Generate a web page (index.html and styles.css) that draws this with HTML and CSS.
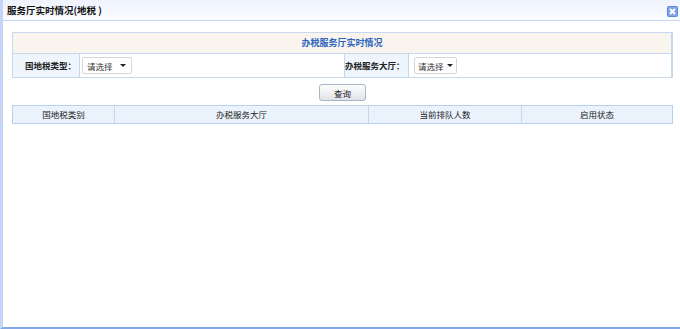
FILE: index.html
```html
<!DOCTYPE html>
<html lang="zh-CN">
<head>
    <meta charset="UTF-8">
    <title>服务厅实时情况(地税 )</title>
    <link rel="stylesheet" href="styles.css">
</head>
<body>
    <div class="window">
        <div class="titlebar">
            <span class="title">服务厅实时情况(地税 )</span>
            <span class="close">
                <svg width="11" height="11" viewBox="0 0 11 11">
                    <rect x="0.5" y="0.5" width="10" height="10" rx="1" fill="#7fa4e8" stroke="#5d86d6"/>
                    <path d="M3 3 L8 8 M8 3 L3 8" stroke="#fff" stroke-width="1.8"/>
                </svg>
            </span>
        </div>
        <div class="content">
            <div class="panel">
                <div class="panel-head">办税服务厅实时情况</div>
                <div class="form-row">
                    <div class="label">国地税类型：</div>
                    <div class="field">
                        <div class="select">请选择 <span class="arrow"></span></div>
                    </div>
                    <div class="label label2">办税服务大厅：</div>
                    <div class="field">
                        <div class="select">请选择 <span class="arrow"></span></div>
                    </div>
                </div>
            </div>
            <div class="actions">
                <button class="btn">查询</button>
            </div>
            <div class="grid-head">
                <div class="col c1">国地税类别</div>
                <div class="col c2">办税服务大厅</div>
                <div class="col c3">当前排队人数</div>
                <div class="col c4">启用状态</div>
            </div>
        </div>
    </div>
</body>
</html>
```

FILE: styles.css
```css
body {
    margin: 0;
    font-family: "Noto Sans CJK SC", "Liberation Sans", sans-serif;
    font-size: 8.5px;
    color: #222;
    background: #fff;
    white-space: nowrap;
}
.window {
    height: 327px;
    border-left: 3px solid #c4d5f6;
    border-bottom: 2px solid #85a8e8;
    background: #fff;
}
.titlebar {
    height: 20px;
    display: flex;
    align-items: center;
    justify-content: space-between;
    padding: 0 2px 0 4px;
    background: linear-gradient(#eef2fc, #fbfcff);
    border-bottom: 1px solid #c6d6f6;
}
.title {
    font-size: 9.5px;
    font-weight: bold;
    color: #111;
}
.close {
    display: flex;
    margin-top: 2px;
}
.content {
    padding: 11px 7px 0 9px;
}
.panel {
    border: 1px solid #c4d9ee;
    border-right-width: 2px;
}
.panel-head {
    height: 20px;
    line-height: 20px;
    text-align: center;
    font-size: 9px;
    background: #faf4ee;
    color: #2c66c0;
    font-weight: bold;
    border-bottom: 1px solid #c4d9ee;
}
.form-row {
    display: flex;
    height: 23px;
}
.label {
    width: 63px;
    padding-right: 3px;
    text-align: right;
    line-height: 23px;
    font-weight: bold;
    background: #eef5fc;
    border-right: 1px solid #c4d9ee;
}
.label2 {
    width: 59px;
    border-left: 1px solid #c4d9ee;
    padding-right: 4px;
}
.field {
    display: flex;
    align-items: center;
    padding-left: 2px;
}
.field:nth-child(2) {
    flex: 1;
}
.field:nth-child(4) {
    width: 257px;
    padding-left: 5px;
}
.select {
    display: flex;
    align-items: center;
    justify-content: space-between;
    box-sizing: border-box;
    width: 50px;
    height: 17px;
    padding: 0 5px 0 4px;
    border: 1px solid #d6d6d6;
    border-radius: 2px;
    background: #fff;
    color: #333;
}
.field:nth-child(4) .select {
    width: 43px;
    padding: 0 3px 0 3px;
}
.arrow {
    width: 0;
    height: 0;
    border-left: 3px solid transparent;
    border-right: 3px solid transparent;
    border-top: 3px solid #222;
}
.actions {
    display: flex;
    justify-content: center;
    padding: 6px 0 4px 0;
}
.btn {
    width: 47px;
    height: 17px;
    padding: 0;
    font-family: inherit;
    font-size: 8.5px;
    color: #222;
    border: 1px solid #a9b6c6;
    border-radius: 3px;
    background: linear-gradient(#fdfdfd, #dfe4ea);
}
.grid-head {
    display: flex;
    height: 17px;
    border: 1px solid #b7d1ec;
    background: #eaf3fc;
}
.col {
    line-height: 17px;
    text-align: center;
    border-right: 1px solid #c3d8ee;
}
.c1 { width: 101px; }
.c2 { width: 253px; }
.c3 { width: 152px; }
.c4 { flex: 1; border-right: none; }
```
